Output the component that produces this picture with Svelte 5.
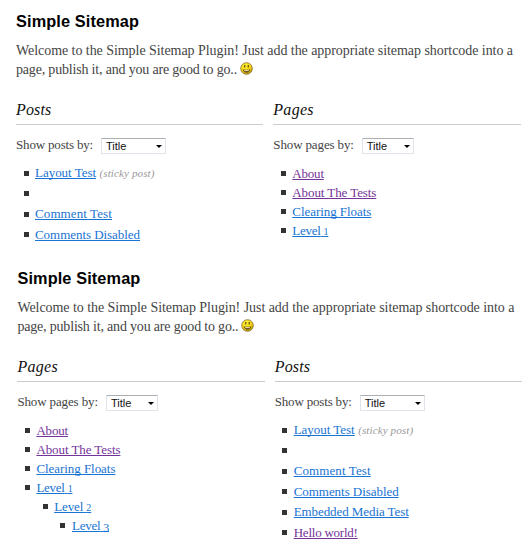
<script>
  const post = (text, width, extra = {}) => ({ text, width, ...extra });

  const pagesShort = [
    { text: 'About', width: 31.5, visited: true },
    { text: 'About The Tests', width: 84, visited: true },
    { text: 'Clearing Floats', width: 79 },
    { text: 'Level', digit: '1', width: 36 }
  ];
  const pagesNested = [
    ...pagesShort.slice(0, 3),
    {
      text: 'Level', digit: '1', width: 36,
      children: [
        { text: 'Level', digit: '2', width: 37, children: [{ text: 'Level', digit: '3', width: 37 }] }
      ]
    }
  ];
  const postsShort = [
    post('Layout Test', 61, { sticky: true }),
    post('', 0),
    post('Comment Test', 77),
    post('Comments Disabled', 105)
  ];
  const postsLong = [
    ...postsShort,
    post('Embedded Media Test', 115),
    post('Hello world!', 64, { visited: true })
  ];

  const postsCol = (items) => ({ title: 'Posts', tw: 35.5, label: 'Show posts by:', lw: 77, kind: 'posts', items });
  const pagesCol = (items) => ({ title: 'Pages', tw: 40.5, label: 'Show pages by:', lw: 80.5, kind: 'pages', items });

  const sections = [
    [postsCol(postsShort), pagesCol(pagesShort)],
    [pagesCol(pagesNested), postsCol(postsLong)]
  ];

  // Tracks the text so that it spans the given width
  function fit(node, width) {
    const natural = node.getBoundingClientRect().width;
    const count = node.textContent.length;
    node.style.letterSpacing = (width - natural) / count + 'px';
  }
</script>

{#snippet list(items, kind)}
  <ul class={kind}>
    {#each items as item}
      <li>
        <div class="row">
          <i class="bullet"></i>
          {#if item.text}
            <a href="#top" class:visited={item.visited}><span use:fit={item.width}>{item.text}{#if item.digit}&nbsp;<span class="digit" class:low={item.digit === '3'}>{item.digit}</span>{/if}</span></a>
          {/if}
          {#if item.sticky}<em><span use:fit={55}>(sticky post)</span></em>{/if}
        </div>
        {#if item.children}{@render list(item.children, kind)}{/if}
      </li>
    {/each}
  </ul>
{/snippet}

<main>
  {#each sections as columns, i}
    <section class:second={i === 1}>
      <h1><span use:fit={123}>Simple Sitemap</span></h1>
      <p>
        <span use:fit={497}>Welcome to the Simple Sitemap Plugin! Just add the appropriate sitemap shortcode into a</span><br />
        <span use:fit={221}>page, publish it, and you are good to go..</span>
        <svg class="smile" width="13" height="13" viewBox="0 0 13 13">
          <defs>
            <radialGradient id="face{i}" cx="40%" cy="30%" r="70%">
              <stop offset="0" stop-color="#fff23a" />
              <stop offset=".65" stop-color="#f6d414" />
              <stop offset="1" stop-color="#bd9208" />
            </radialGradient>
          </defs>
          <circle cx="6.5" cy="6.5" r="5.8" fill="url(#face{i})" stroke="#85702f" stroke-width=".8" />
          <path d="M4.8 3v2.5M8.2 3v2.5" stroke="#3b2d05" stroke-width="1" />
          <path d="M2.7 6.9c.4 4.8 7.2 4.8 7.6 0-.7 1.2-6.9 1.2-7.6 0z" fill="#4b3a08" />
          <path d="M4.1 8.7h4.8" stroke="#fff6bd" stroke-width="1" />
        </svg>
      </p>
      <div class="columns">
        {#each columns as col}
          <div class="col">
            <h2><span use:fit={col.tw}>{col.title}</span></h2>
            <div class="filter">
              <span use:fit={col.lw}>{col.label}</span>
              <div class="select {col.kind}">
                <span>Title</span>
                <svg width="6" height="3" viewBox="0 0 6 3"><path d="M0 0h6L3 3z" fill="#000" /></svg>
              </div>
            </div>
            {@render list(col.items, col.kind)}
          </div>
        {/each}
      </div>
    </section>
  {/each}
</main>

<style>
  :global(body) { background: #fff; }
  main {
    box-sizing: border-box;
    width: 530px;
    height: 556px;
    padding: 11px 0 0 16px;
    overflow: hidden;
    color: #444;
    font: 14px/19px "Liberation Serif", Georgia, serif;
  }
  section { height: 257px; width: 505px; }
  .second { margin-left: 1.4px; }
  h1 {
    margin: 0 0 10px;
    color: #000;
    font: bold 16.3px/20px "Liberation Sans", Arial, sans-serif;
  }
  p { margin: 0; height: 38px; white-space: nowrap; }
  .smile { vertical-align: -1px; margin-left: -.5px; }
  .columns { display: flex; gap: 10px; margin-top: 21px; }
  .col { width: 247.3px; }
  h2 {
    margin: 0;
    padding-bottom: 5px;
    border-bottom: 1px solid #ccc;
    color: #111;
    font-size: 16px;
    font-weight: normal;
    font-style: italic;
    line-height: 19px;
  }
  .filter { display: flex; gap: 8px; height: 19px; margin-top: 11px; font-size: 13px; }
  .filter > span { line-height: 18px; }
  .select {
    box-sizing: border-box;
    display: flex;
    align-items: center;
    justify-content: space-between;
    height: 16px;
    margin-top: 2px;
    padding: 0 3px 0 4px;
    border: 1px solid #e2e3ea;
    border-top-color: #abadb3;
    border-radius: 1px;
    color: #111;
    font: 11px/14px "Liberation Sans", Arial, sans-serif;
  }
  .select > span { line-height: 14px; }
  .select.posts { width: 65px; }
  .select.pages { width: 52px; }
  ul { margin: 0; padding: 0; list-style: none; font-size: 13px; }
  .filter + ul.pages { margin-top: 9px; }
  .filter + ul.posts { margin-top: 8px; }
  ul.posts { line-height: 20.8px; }
  .row { display: flex; align-items: baseline; height: 19px; padding-left: 7.5px; white-space: nowrap; }
  .posts .row { height: 20.5px; }
  .bullet { align-self: center; width: 5px; height: 5px; margin-right: 6.5px; background: #333; }
  li ul { padding-left: 17.8px; }
  a {
    color: #1874d2;
    text-decoration: underline;
    text-decoration-thickness: 1px;
    text-underline-offset: 1px;
    text-decoration-skip-ink: none;
  }
  a.visited { color: #743399; }
  .digit { display: inline; font-size: 10px; }
  .digit.low { font-size: 12px; vertical-align: -2px; line-height: 1; }
  em { margin-left: 3.5px; color: #999; font-size: 11px; }
</style>
